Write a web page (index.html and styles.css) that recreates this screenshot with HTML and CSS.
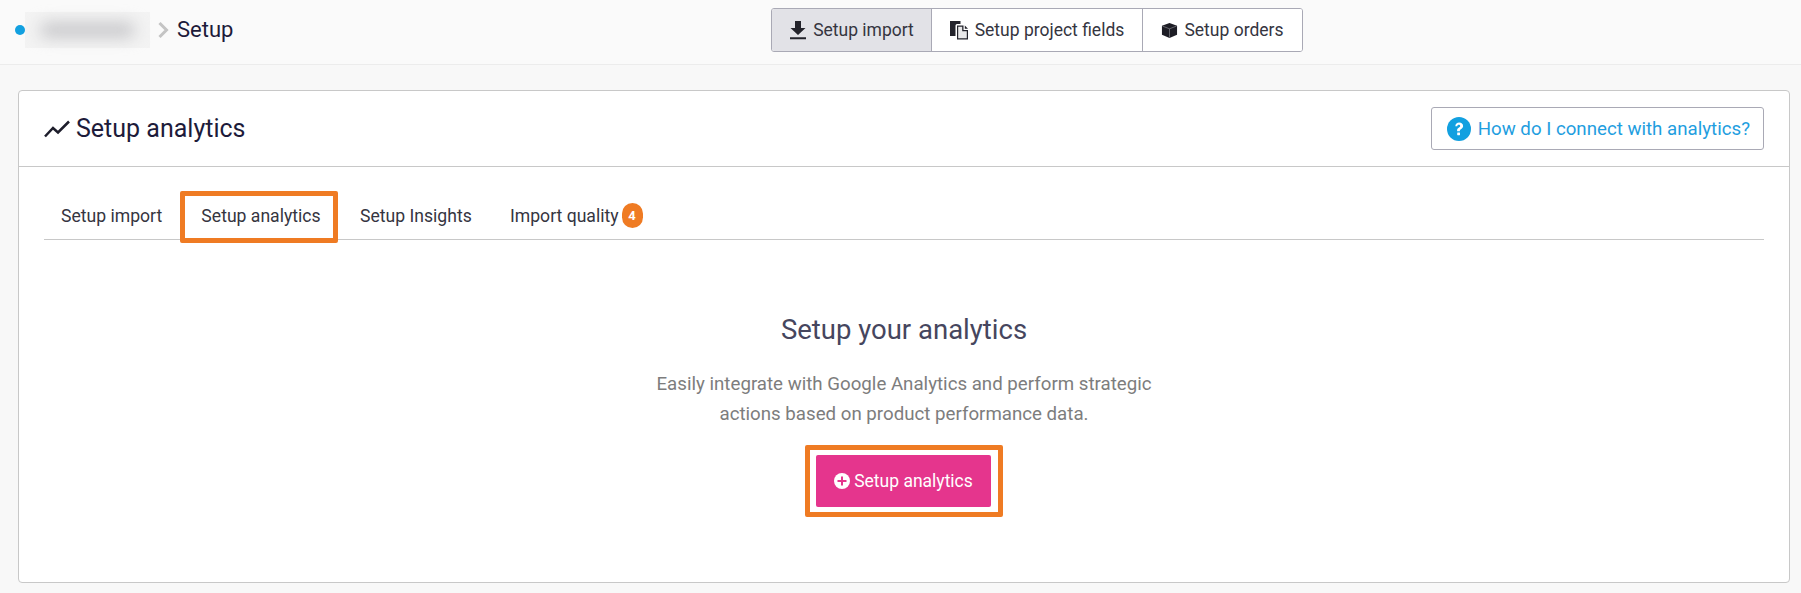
FILE: index.html
```html
<!DOCTYPE html>
<html lang="en">
<head>
<meta charset="utf-8">
<title>Setup analytics</title>
<link rel="stylesheet" href="styles.css">
</head>
<body>
<header class="topbar">
  <nav class="crumbs">
    <span class="dot"></span>
    <span class="blurred"><span class="blurred-core"></span></span>
    <svg class="chev" viewBox="0 0 12 18" width="12" height="18"><path d="M2.500 2l7 7-7 7" fill="none" stroke="#c4c4c4" stroke-width="3"/></svg>
    <span class="crumb-title">Setup</span>
  </nav>
  <div class="btn-group">
    <button class="seg seg-active">
      <svg class="seg-icon" viewBox="0 0 18 20" width="18" height="20"><path d="M6 1h6v7h4.500L9 15 1.500 8H6zM1 17.300h16V19.200H1z" fill="#23232b"/></svg>
      Setup import
    </button>
    <button class="seg seg-fields">
      <svg class="seg-icon" viewBox="0 0 19 20" width="19" height="20"><path d="M0 1h10.500v3H7a1.500 1.500 0 0 0-1.500 1.500V16H0zM7 5.500h6.500v4.500H18v9.500H7z" fill="#23232b"/><path d="M14.800 5.500L18 8.700h-3.200z" fill="#23232b"/><path d="M8.200 6.800h4v4.500h4.600v7H8.200z" fill="#fff" opacity=".9"/></svg>
      Setup project fields
    </button>
    <button class="seg seg-last">
      <svg class="seg-icon" viewBox="0 0 18 18" width="17" height="17"><path d="M9 1l8 3v9.500L9 17l-8-3.500V4z" fill="#1d1d25"/><path d="M1.500 4.300L9 7.200l7.500-2.900M9 7.200V16.500" fill="none" stroke="#8a8a90" stroke-width=".7"/></svg>
      Setup orders
    </button>
  </div>
</header>

<main class="card">
  <div class="card-head">
    <h1 class="card-title">
      <svg viewBox="0 0 26 18" width="26" height="18"><path d="M1 16.500l8-8.500 5 4.500L25 1.500" fill="none" stroke="#1d1d2b" stroke-width="2.500"/></svg>
      Setup analytics
    </h1>
    <a class="help-btn" href="#">
      <svg viewBox="0 0 24 24" width="24" height="24"><circle cx="12" cy="12" r="12" fill="#12a0e0"/><path d="M8.300 9.200C8.500 7 10 5.600 12.200 5.600c2.200 0 3.900 1.300 3.900 3.300 0 1.500-.9 2.300-1.900 3-.9.600-1.300 1-1.300 1.800v.5h-2.800v-.8c0-1.300.6-2 1.600-2.700.9-.6 1.500-1 1.500-1.700 0-.7-.6-1.200-1.400-1.200-.9 0-1.400.5-1.600 1.500z" fill="#fff"/><rect x="10.200" y="15.400" width="2.800" height="2.800" rx=".4" fill="#fff"/></svg>
      How do I connect with analytics?
    </a>
  </div>
  <div class="card-body">
    <div class="tabs">
      <a class="tab tab-first" href="#">Setup import</a>
      <a class="tab tab-marked" href="#">Setup analytics</a>
      <a class="tab tab-third" href="#">Setup Insights</a>
      <a class="tab tab-fourth" href="#">Import quality<span class="badge">4</span></a>
    </div>
    <section class="empty">
      <h2 class="empty-title">Setup your analytics</h2>
      <p class="empty-text">Easily integrate with Google Analytics and perform strategic<br>actions based on product performance data.</p>
      <div class="cta-mark">
        <a class="cta" href="#">
          <svg viewBox="0 0 16 16" width="16" height="16"><circle cx="8" cy="8" r="8" fill="#fff"/><path d="M7 3.500h2V7h3.500v2H9v3.500H7V9H3.500V7H7z" fill="#e5358d"/></svg>
          Setup analytics
        </a>
      </div>
    </section>
  </div>
</main>
</body>
</html>
```

FILE: styles.css
```css
* { box-sizing: border-box; }
html, body { margin: 0; padding: 0; }
body {
  width: 1801px;
  height: 593px;
  overflow: hidden;
  background: #f8f8f8;
  font-family: Roboto, "Liberation Sans", sans-serif;
  color: #23232b;
}

.topbar {
  display: grid;
  grid-template-columns: 771px auto 1fr;
  align-items: center;
  height: 65px;
  background: #fafafa;
  border-bottom: 1px solid #ececec;
}
.crumbs {
  display: flex;
  align-items: center;
  padding-left: 15px;
  height: 60px;
  margin-top: -5px;
}
.dot {
  width: 10px;
  height: 10px;
  border-radius: 50%;
  background: #12a0e0;
}
.blurred {
  display: flex;
  align-items: center;
  justify-content: center;
  width: 125px;
  height: 36px;
  background: #f3f3f3;
}
.blurred-core {
  width: 95px;
  height: 14px;
  background: #c4c4c7;
  border-radius: 7px;
  filter: blur(8px);
}
.chev { margin-left: 7px; }
.crumb-title {
  margin-left: 8px;
  font-size: 22px;
  color: #1d1b3a;
}

.btn-group {
  display: flex;
  height: 44px;
  margin-top: -4px;
  border: 1px solid #a9a9b5;
  border-radius: 3px;
  background: #fff;
  overflow: hidden;
}
.seg {
  display: flex;
  align-items: center;
  justify-content: center;
  gap: 6px;
  height: 100%;
  width: 160px;
  padding: 0;
  border: 0;
  border-right: 1px solid #a9a9b5;
  background: #fff;
  font: 400 17.500px Roboto, sans-serif;
  color: #35353f;
}
.seg-active { background: #e2e2e7; }
.seg-fields { width: 211px; }
.seg-last { width: 159px; border-right: 0; }
.seg-icon { flex: none; }

.card {
  margin: 25px 0 0 18px;
  width: 1772px;
  height: 493px;
  background: #fff;
  border: 1px solid #c8c8c8;
  border-radius: 4px;
}
.card-head {
  display: flex;
  align-items: center;
  justify-content: space-between;
  height: 76px;
  padding: 0 25px;
  border-bottom: 1px solid #c8c8c8;
}
.card-title {
  display: flex;
  align-items: center;
  gap: 6px;
  margin: 0;
  font-size: 25px;
  font-weight: 400;
  color: #1d1b3a;
}
.help-btn {
  display: flex;
  align-items: center;
  gap: 7px;
  height: 43px;
  padding: 0 13px 0 15px;
  border: 1px solid #a9a9b5;
  border-radius: 3px;
  font-size: 18.700px;
  color: #1f9ee0;
  text-decoration: none;
}

.card-body { padding: 0 25px; }
.tabs {
  display: flex;
  align-items: flex-end;
  height: 73px;
  border-bottom: 1px solid #c8c8c8;
}
.tab {
  display: flex;
  align-items: center;
  height: 51px;
  margin-bottom: -2px;
  font-size: 17.600px;
  color: #35353f;
  text-decoration: none;
}
.tab-first { padding-left: 17px; width: 136px; }
.tab-marked {
  justify-content: center;
  width: 158px;
  height: 52px;
  margin-bottom: -4px;
  padding: 0 0 3px 4px;
  border: 5px solid #ef7b23;
  border-radius: 2px;
  background: #fff;
}
.tab-third { margin-left: 22px; width: 150px; }
.tab-fourth { gap: 3px; }
.badge {
  display: flex;
  align-items: center;
  justify-content: center;
  width: 21px;
  height: 25px;
  border-radius: 11px;
  background: #ef7b23;
  color: #fff;
  font-size: 13px;
  font-weight: 700;
}

.empty {
  display: flex;
  flex-direction: column;
  align-items: center;
}
.empty-title {
  margin: 72px 0 0;
  font-size: 27.500px;
  line-height: 36px;
  font-weight: 400;
  color: #46465e;
}
.empty-text {
  margin: 21px 0 0;
  font-size: 18.700px;
  line-height: 30px;
  text-align: center;
  color: #7d7d7d;
}
.cta-mark {
  margin-top: 16px;
  padding: 5px 7px 5px 6px;
  border: 5px solid #ef7b23;
  border-radius: 2px;
}
.cta {
  display: flex;
  align-items: center;
  justify-content: center;
  gap: 4px;
  width: 175px;
  height: 52px;
  border-radius: 2px;
  background: #e5358d;
  color: #fff;
  font-size: 17.500px;
  text-decoration: none;
}
```
